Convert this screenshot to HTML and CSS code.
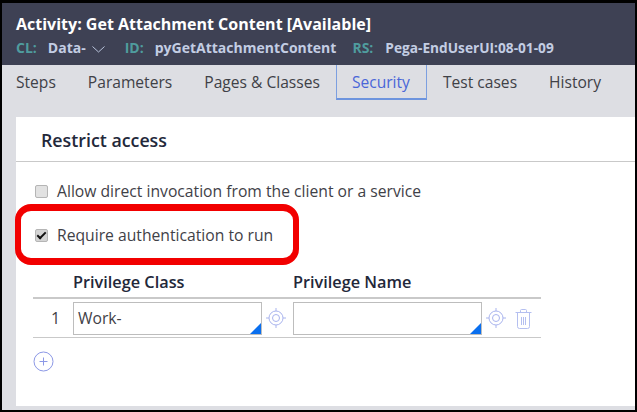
FILE: index.html
```html
<!DOCTYPE html>
<html lang="en">
<head>
    <meta charset="UTF-8">
    <title>Activity: Get Attachment Content</title>
    <link rel="stylesheet" href="styles.css">
</head>
<body>

<div class="frame">
    <div class="header">
        <h1 class="title">Activity: Get Attachment Content [Available]</h1>
        <div class="meta">
            <span class="meta-label">CL:</span>
            <span class="meta-value data-value">Data-</span>
            <svg class="chevron" width="13" height="7" viewBox="0 0 13 7"><path d="M.5.5l6 5.5 6-5.5" fill="none" stroke="#b9c3da" stroke-width="1"/></svg>
            <span class="meta-label id-label">ID:</span>
            <span class="meta-value">pyGetAttachmentContent</span>
            <span class="meta-label rs-label">RS:</span>
            <span class="meta-value rs-value">Pega-EndUserUI:08-01-09</span>
        </div>
    </div>

    <div class="tabs">
        <span class="tab">Steps</span>
        <span class="tab">Parameters</span>
        <span class="tab">Pages &amp; Classes</span>
        <span class="tab active">Security</span>
        <span class="tab">Test cases</span>
        <span class="tab">History</span>
    </div>

    <div class="panel">
        <h2 class="panel-title">Restrict access</h2>
        <div class="panel-body">
            <label class="check"><input type="checkbox"> Allow direct invocation from the client or a service</label>
            <label class="check second"><input type="checkbox" checked> Require authentication to run</label>

            <div class="grid">
                <div class="grid-head">
                    <span class="col-class">Privilege Class</span>
                    <span class="col-name">Privilege Name</span>
                </div>
                <div class="grid-row">
                    <span class="row-num">1</span>
                    <div class="field">Work-</div>
                    <svg class="target" width="20" height="20" viewBox="0 0 20 20"><use href="#target"/></svg>
                    <div class="field"></div>
                    <svg class="target" width="20" height="20" viewBox="0 0 20 20"><use href="#target"/></svg>
                    <svg class="trash" width="17" height="20" viewBox="0 0 17 20" fill="none" stroke="#b4bff0" stroke-width="1">
                        <path d="M.5 3.5h16M5.5 3V1.5q0-1 1-1h4q1 0 1 1V3M2.5 4v13.5q0 2 2 2h8q2 0 2-2V4M6.5 8v8M8.5 8v8M10.5 8v8"/>
                    </svg>
                </div>
            </div>

            <svg class="add" width="21" height="21" viewBox="0 0 21 21" fill="none" stroke="#8c98e6" stroke-width="1">
                <circle cx="10.5" cy="10.5" r="9.5"/>
                <path d="M6.5 10.5h8M10.5 6.5v8"/>
            </svg>
        </div>
    </div>

    <!-- red marker drawn over the screenshot -->
    <div class="marker"></div>
</div>

<svg class="defs" width="0" height="0">
    <symbol id="target" viewBox="0 0 20 20">
        <g fill="none" stroke="#a9b4ee" stroke-width="1">
            <circle cx="10" cy="10" r="7"/>
            <circle cx="10" cy="10" r="3.5"/>
            <path d="M10 0v3M10 17v3M0 10h3M17 10h3"/>
        </g>
    </symbol>
</svg>

</body>
</html>
```

FILE: styles.css
```css
html, body {
    margin: 0;
    padding: 0;
}
body {
    width: 637px;
    height: 412px;
    overflow: hidden;
    background-color: #000;
    font-family: 'Open Sans', Arial, sans-serif;
}
.frame {
    position: relative;
    box-sizing: border-box;
    width: 633px;
    height: 407px;
    margin: 3px 2px 2px 2px;
    background-color: #dddee3;
    display: flex;
    flex-direction: column;
}
.header {
    box-sizing: border-box;
    height: 62px;
    padding: 11px 0 0 14px;
    background-color: #3e4154;
}
.title {
    margin: 0;
    font-size: 16px;
    line-height: 20px;
    font-weight: 700;
    color: #fff;
}
.meta {
    display: flex;
    align-items: center;
    margin-top: 5px;
    font-size: 14px;
    line-height: 18px;
    font-weight: 700;
}
.meta-label {
    color: #4f9c9e;
    margin-right: 11px;
}
.meta-value {
    color: #c3cde3;
}
.rs-value {
    font-size: 13.7px;
}
.chevron {
    margin: 2px 0 0 6px;
}
.id-label {
    margin-left: 20px;
}
.rs-label {
    margin-left: 16px;
    margin-right: 12px;
}
.tabs {
    display: flex;
    height: 35px;
    font-size: 15.6px;
    color: #3f4147;
}
.tab {
    box-sizing: border-box;
    height: 35px;
    padding: 5px 16px 0 16px;
    line-height: 24px;
}
.tab:first-child {
    padding-left: 14px;
}
.tab.active {
    padding: 5px 16px 0 15px;
    color: #4a66d8;
    border: 1px solid #7c9fe0;
    border-top: none;
    border-bottom: 2px solid #6d94de;
}
.panel {
    flex: 1;
    margin: 17px 0 4px 14px;
    background-color: #fff;
}
.panel-title {
    margin: 0;
    box-sizing: border-box;
    height: 45px;
    padding: 12px 0 0 25px;
    font-size: 17.8px;
    line-height: 22px;
    font-weight: 600;
    color: #23283a;
    border-bottom: 1px solid #c9c9c9;
}
.panel-body {
    padding: 17px 0 0 17px;
}
.check {
    display: flex;
    align-items: center;
    height: 24px;
    font-size: 15.7px;
    color: #3f4147;
}
.check input {
    appearance: none;
    position: relative;
    box-sizing: border-box;
    width: 13px;
    height: 13px;
    margin: 0 9px 0 2px;
    border: 1px solid #b5b5b5;
    border-radius: 2px;
    background-color: #e2e2e2;
}
.check input:checked {
    background-color: #d4d4d4;
}
.check input:checked::after {
    content: "";
    position: absolute;
    left: 3px;
    top: 0;
    width: 3px;
    height: 7px;
    border: solid #111;
    border-width: 0 2px 2px 0;
    transform: rotate(45deg);
}
.check.second {
    margin-top: 20px;
}
.grid {
    width: 508px;
    margin-top: 22px;
}
.grid-head {
    display: flex;
    height: 28px;
    font-size: 16.3px;
    line-height: 26px;
    font-weight: 600;
    color: #23283a;
    border-bottom: 2px solid #c9c9c9;
}
.col-class {
    margin-left: 40px;
    width: 220px;
}
.grid-row {
    display: flex;
    align-items: center;
    height: 39px;
    box-sizing: border-box;
    border-bottom: 1px solid #c9c9c9;
}
.row-num {
    width: 40px;
    box-sizing: border-box;
    padding-left: 18px;
    font-size: 16px;
    color: #3f4147;
}
.field {
    position: relative;
    box-sizing: border-box;
    width: 189px;
    height: 33px;
    padding-left: 4px;
    border: 1px solid #bdbdbd;
    font-size: 15.7px;
    line-height: 30px;
    color: #3f4147;
}
.field::after {
    content: "";
    position: absolute;
    right: 0;
    bottom: 0;
    border-style: solid;
    border-width: 0 0 11px 11px;
    border-color: transparent transparent #0a6fef transparent;
}
.target {
    margin: 0 7px 0 4px;
    flex: none;
}
.trash {
    flex: none;
    margin: 1px 0 0 2px;
}
.add {
    display: block;
    margin-top: 13px;
}
.defs {
    position: absolute;
}
.marker {
    position: absolute;
    left: 13px;
    top: 201px;
    width: 284px;
    height: 61px;
    box-sizing: border-box;
    border: solid #f20000;
    border-width: 7px 6px;
    border-radius: 16px;
}
```
